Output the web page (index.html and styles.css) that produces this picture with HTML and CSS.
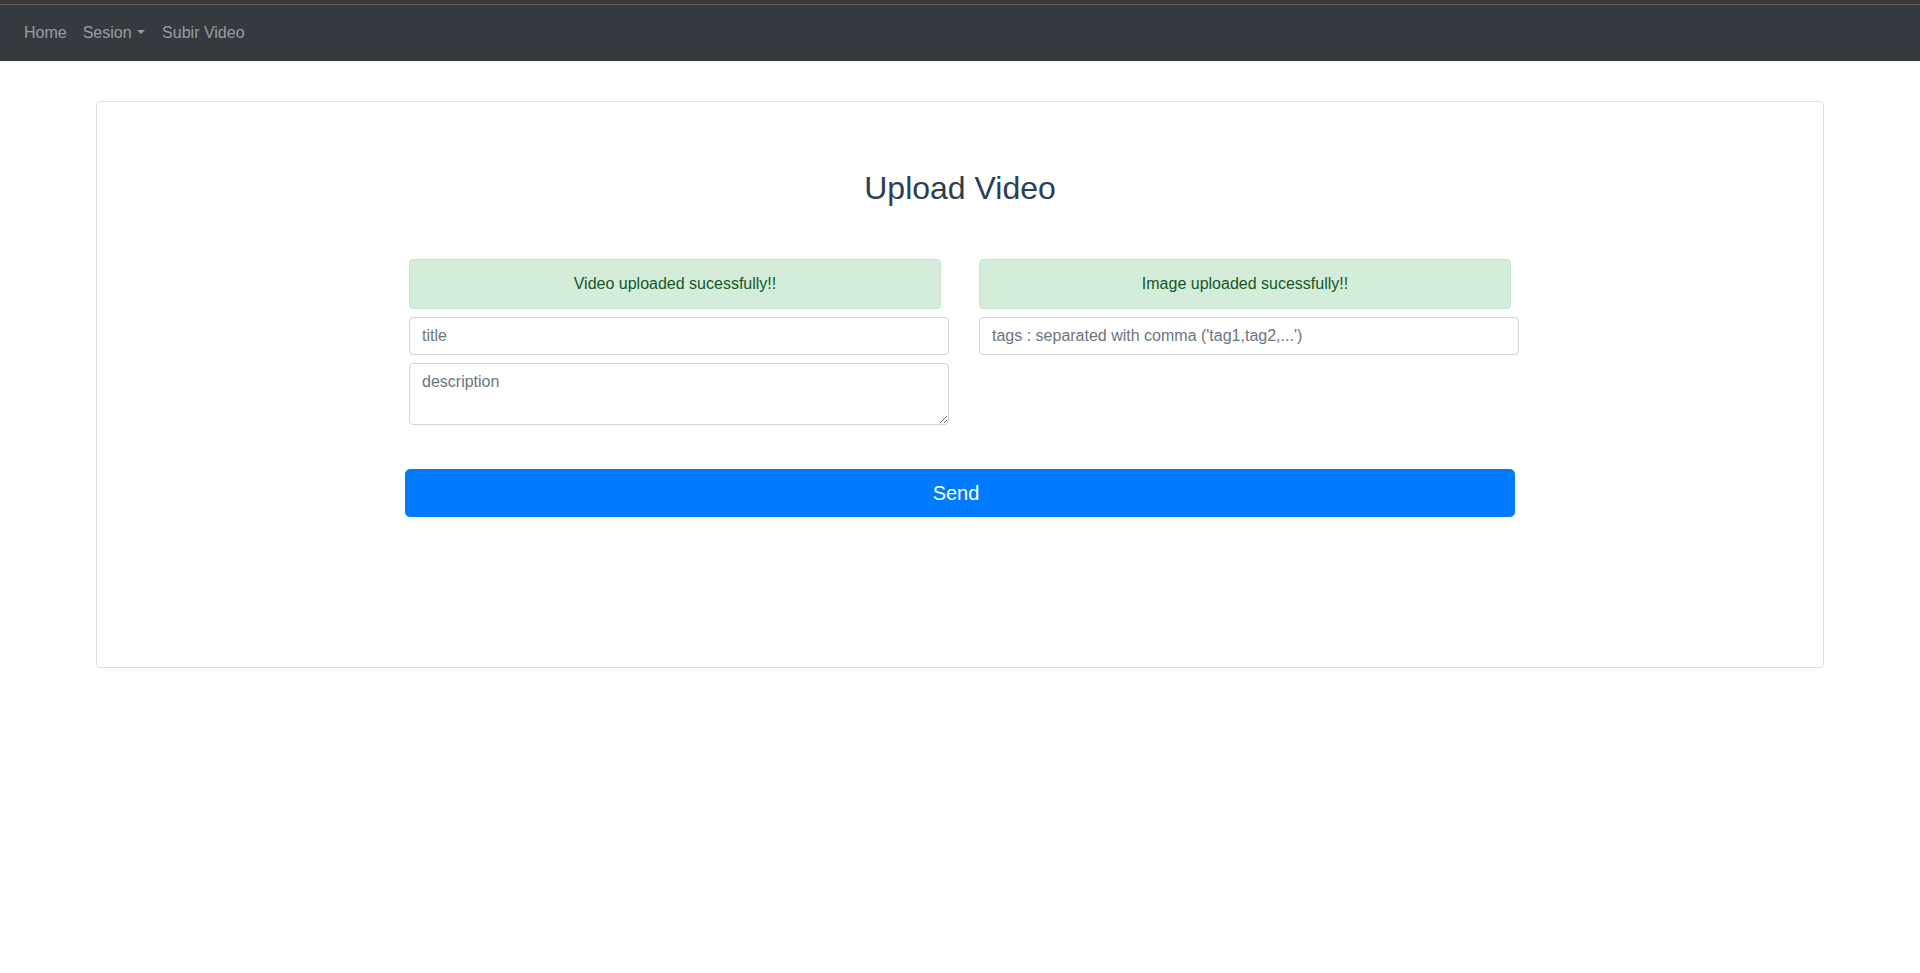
FILE: index.html
```html
<!DOCTYPE html>
<html lang="en">
<head>
<meta charset="utf-8">
<title>Upload Video</title>
<link rel="stylesheet" href="styles.css">
</head>
<body>
<div class="topstripe"></div>
<nav class="navbar">
  <a class="nav-link" href="#">Home</a>
  <a class="nav-link dropdown" href="#">Sesion<span class="caret"></span></a>
  <a class="nav-link" href="#">Subir Video</a>
</nav>
<main class="app">
  <section class="card">
    <h2 class="title">Upload Video</h2>
    <form class="upload-form">
      <div class="grid">
        <div class="col">
          <div class="alert">Video uploaded sucessfully!!</div>
          <input class="form-control" type="text" placeholder="title">
          <textarea class="form-control textarea" rows="2" placeholder="description"></textarea>
        </div>
        <div class="col">
          <div class="alert">Image uploaded sucessfully!!</div>
          <input class="form-control" type="text" placeholder="tags : separated with comma ('tag1,tag2,...')">
        </div>
      </div>
      <button class="btn" type="button">Send</button>
    </form>
  </section>
</main>
</body>
</html>
```
FILE: styles.css
```css
* { box-sizing: border-box; }
html, body { margin: 0; padding: 0; }
body {
  font-family: "Liberation Sans", Arial, Helvetica, sans-serif;
  font-size: 16px;
  line-height: 1.5;
  color: #2c3e50;
  background: #fff;
}
.topstripe {
  height: 5px;
  background: #3a3a3a;
  border-bottom: 1px solid #626262;
}
.navbar {
  display: flex;
  align-items: center;
  height: 56px;
  padding: 8px 16px;
  background: #343a40;
}
.nav-link {
  display: inline-flex;
  align-items: center;
  padding: 8px;
  color: rgba(255,255,255,.5);
  text-decoration: none;
  line-height: 24px;
}
.caret {
  display: inline-block;
  margin-left: 5px;
  margin-right: 1.5px;
  width: 0;
  height: 0;
  border-top: 4.8px solid rgba(255,255,255,.5);
  border-left: 4.8px solid transparent;
  border-right: 4.8px solid transparent;
  margin-top: -2px;
}
.app { text-align: center; padding-top: 40px; }
.card {
  width: 90%;
  margin: 0 auto;
  border: 1px solid rgba(0,0,0,.125);
  border-radius: 4px;
  padding: 67px 0 149px;
  min-height: 567px;
}
.title {
  margin: 0 0 51.6px;
  font-size: 32px;
  font-weight: 400;
  line-height: 1.2;
  color: #2c3e50;
}
.upload-form {
  width: 1110px;
  margin: 0 auto;
}
.grid {
  display: grid;
  grid-template-columns: 540px 540px;
  column-gap: 30px;
  margin: 0 -4px 0 4px;
  align-items: start;
}
.col {
  display: flex;
  flex-direction: column;
  gap: 8px;
}
.alert {
  margin-right: 8px;
  padding: 12px 20px;
  border: 1px solid #c3e6cb;
  border-radius: 4px;
  background: #d4edda;
  color: #155724;
  line-height: 24px;
  text-align: center;
}
.form-control {
  display: block;
  width: 100%;
  height: 38px;
  padding: 6px 12px;
  font-family: inherit;
  font-size: 16px;
  line-height: 24px;
  color: #495057;
  background: #fff;
  border: 1px solid #ced4da;
  border-radius: 4px;
}
.form-control::placeholder { color: #6c757d; opacity: 1; }
.textarea { height: 62px; resize: vertical; }
.btn {
  display: block;
  width: 100%;
  margin-top: 44px;
  height: 48px;
  padding: 8px 20px 8px 12px;
  font-family: inherit;
  font-size: 20px;
  line-height: 30px;
  color: #fff;
  background: #007bff;
  border: 1px solid #007bff;
  border-radius: 4.8px;
}
```
